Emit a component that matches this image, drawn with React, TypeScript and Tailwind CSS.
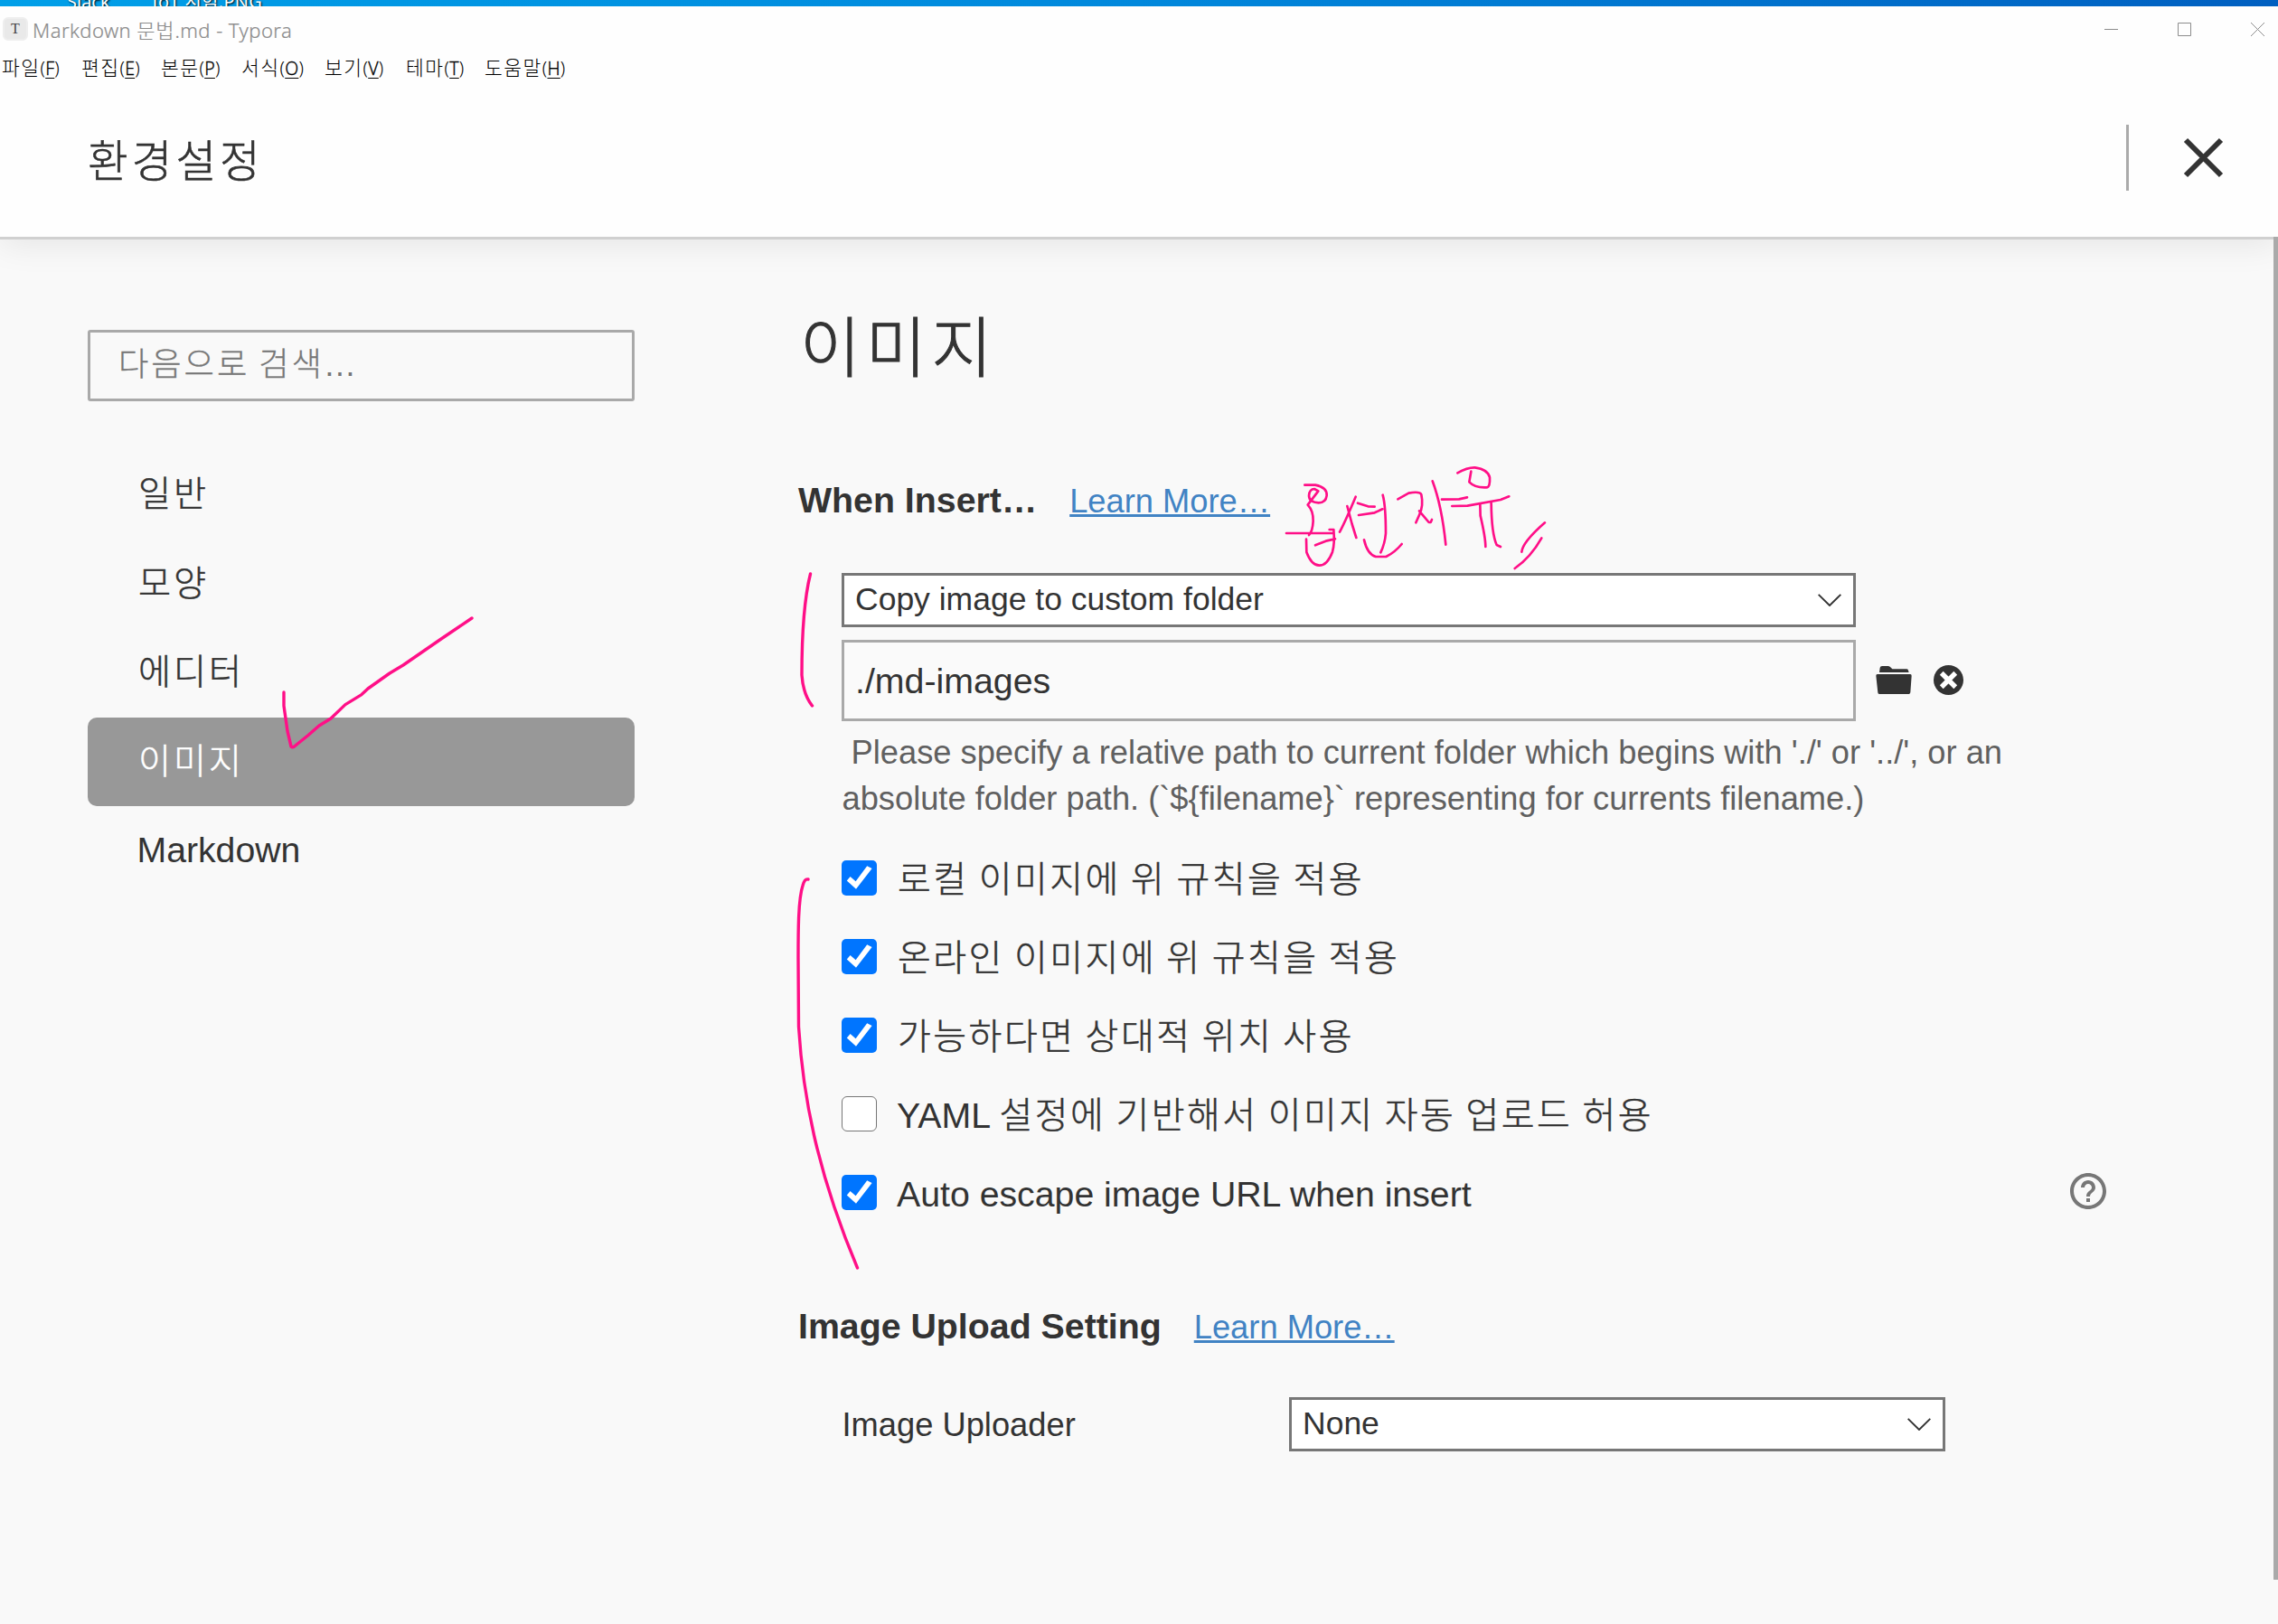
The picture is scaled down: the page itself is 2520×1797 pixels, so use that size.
import React from "react";
import { MdHelpOutline } from "react-icons/md";

const menus = [
  { label: "파일", key: "F", width: "w-[88px]" },
  { label: "편집", key: "E", width: "w-[88px]" },
  { label: "본문", key: "P", width: "w-[89px]" },
  { label: "서식", key: "O", width: "w-[92px]" },
  { label: "보기", key: "V", width: "w-[90px]" },
  { label: "테마", key: "T", width: "w-[87px]" },
  { label: "도움말", key: "H", width: "w-[100px]" },
];

const navItems = ["일반", "모양", "에디터", "이미지", "Markdown"];

const options = [
  { latin: "", text: "로컬 이미지에 위 규칙을 적용", checked: true },
  { latin: "", text: "온라인 이미지에 위 규칙을 적용", checked: true },
  { latin: "", text: "가능하다면 상대적 위치 사용", checked: true },
  { latin: "YAML ", text: "설정에 기반해서 이미지 자동 업로드 허용", checked: false },
  { latin: "Auto escape image URL when insert", text: "", checked: true, help: true },
];

function Chevron() {
  return (
    <svg className="mt-px h-[14px] w-[26px]" viewBox="0 0 26 14" fill="none" stroke="#333" strokeWidth="1.9">
      <path d="M0.7 0.8 L13 13 L25.3 0.8" />
    </svg>
  );
}

function Select({ value, width }: { value: string; width: string }) {
  return (
    <div className={`flex h-[60px] items-center justify-between border-[3px] border-[#777] bg-white pb-px pl-[12px] pr-[13px] text-[35.5px] ${width}`}>
      <span>{value}</span>
      <Chevron />
    </div>
  );
}

function Checkbox({ checked }: { checked: boolean }) {
  return checked ? (
    <span className="h-[39px] w-[39px] rounded-[5px] bg-[#0075ff]">
      <svg viewBox="0 0 39 39" className="h-full w-full" fill="#fff">
        <path d="M5.8 22.4 L9.6 18 L15.6 23.3 L28.2 6.3 L33.6 9 L16 31.8 Z" />
      </svg>
    </span>
  ) : (
    <span className="h-[39px] w-[39px] rounded-[6px] border border-[#767676] bg-white" />
  );
}

function SectionTitle({ title, className }: { title: string; className: string }) {
  return (
    <div className={`flex h-[50px] items-baseline gap-[36px] pl-px leading-[50px] ${className}`}>
      <h2 className="text-[39.3px] font-bold">{title}</h2>
      <a className="text-[36.3px] text-[#4183c4] underline decoration-[3px] underline-offset-[2px] [text-decoration-skip-ink:none]">
        Learn More…
      </a>
    </div>
  );
}

function Annotations() {
  return (
    <svg
      className="pointer-events-none absolute left-0 top-0 h-[1797px] w-[2520px]"
      viewBox="0 0 2520 1797"
      fill="none"
      stroke="#ff0f87"
      strokeLinecap="round"
      strokeLinejoin="round"
    >
      <g strokeWidth="3.4">
        <path d="M314 766 L314 781 L318 809 L322 826 Q324 828 328 824 L341 813.5 L353 803 L366 795 L382 779.6 L400 768.6 L407 762 L431 745 L446 736 L488 707 L522 684" />
        <path d="M896.5 635 C889 665 887 700 887 747 C888 762 893 774 898.5 781" />
        <path d="M894 973 Q890 972 888 980 C883 995 883 1030 883 1060 L883.5 1136 C888 1210 903 1295 948.5 1403" />
      </g>
      <g transform="translate(1360 480) scale(0.33333)" strokeWidth="8">
        <path d="M250 170 L285 170 Q325 178 323 205 Q320 229 296 229 Q264 228 264 205 Q266 183 282 183 L295 190 L260 236 Q279 256 278 290 Q276 325 264 336" />
        <path d="M189 330 L346 330 M332 318 L346 318 Q350 365 342 392 Q325 437 298 437 Q272 436 256 393 L255 350 M285 370 L320 356 L351 349" />
        <path d="M419 209 Q385 290 366 326 M391 240 L407 300 L421 345 M426 230 L460 241 L482 242 M429 270 L482 262 L508 250 M509 203 Q519 240 519 330 Q516 365 502 394 M447 352 Q458 400 486 408 L520 408 Q550 393 572 366" />
        <path d="M559 217 L595 197 Q632 190 637 202 Q645 240 630 270 L619 295 M630 256 L662 294 L668 294 L672 285 M674 157 Q705 240 718 368 M705 218 L762 217 L789 211" />
        <path d="M757 130 Q790 111 815 112 Q858 118 864 145 Q866 178 853 178 Q815 180 796 160 L802 125 M739 240 L790 239 L900 219 L928 208 M832 235 L833 272 Q850 345 850 375 M869 230 Q870 330 887 369 L900 375" />
        <path d="M1047 295 Q973 360 970 392 M1036 346 Q1000 410 947 447" />
      </g>
    </svg>
  );
}

export default function App() {
  return (
    <div className="relative flex h-[1797px] w-[2520px] flex-col overflow-hidden bg-[#f9f9f9] font-['Liberation_Sans','Noto_Sans_CJK_KR',sans-serif] text-[#333]">
      <div className="flex h-[7px] shrink-0 items-end gap-[47px] overflow-hidden bg-linear-to-r from-[#009fe8] via-[#0088dc] to-[#005fc0] pl-[74px] font-['Noto_Sans','Noto_Sans_CJK_KR',sans-serif] text-[20px] leading-[20px] text-white [text-shadow:1px_1px_2px_#000]">
        <span className="-mb-[5px] w-[47px]">Slack</span>
        <span className="-mb-[5px] whitespace-nowrap tracking-[0.3px]">IoT 시험.PNG</span>
      </div>

      <div className="relative z-10 flex h-[53px] shrink-0 items-start bg-[#fefefe] font-['Noto_Sans','Noto_Sans_CJK_KR',sans-serif] text-[22px] text-[#8c8c8c]">
        <div className="ml-[3px] mt-[12px] flex h-[26px] w-[28px] items-center justify-center rounded-[6px] border-2 border-[#eee] bg-[#e9e9e9] font-['Liberation_Serif',serif] text-[16px] text-[#444]">
          T
        </div>
        <div className="ml-[5px] mt-[11px] flex-1 whitespace-pre font-light leading-[30px] tracking-[0.45px] [-webkit-text-stroke:0.2px]">
          Markdown <span className="tracking-[0.8px]">문법</span>.md - Typora
        </div>
        <svg className="mr-[15px] mt-[18px] h-[15px] w-[177px]" viewBox="0 0 177 15" fill="none" stroke="#8c8c8c">
          <path d="M0 7.5 H15" />
          <path d="M81.5 0.5 h14 v14 h-14 Z" />
          <path d="M162 0 L177 15 M177 0 L162 15" />
        </svg>
      </div>

      <div className="relative z-10 flex h-[32px] shrink-0 bg-[#fefefe] pl-[2px] font-['Noto_Sans','Noto_Sans_CJK_KR',sans-serif] text-[19.5px] leading-[30px] text-black">
        {menus.map((m) => (
          <div key={m.key} className={`whitespace-nowrap ${m.width}`}>
            <span className="text-[21.5px] font-light tracking-[1.5px]">{m.label}</span>
            <span className="font-light tracking-[0.2px]">
              (<span className="underline decoration-1 underline-offset-[3px] [-webkit-text-stroke:0.3px]">{m.key}</span>)
            </span>
          </div>
        ))}
      </div>

      <header className="relative flex h-[173px] shrink-0 items-center border-b-[3px] border-[#d0d0d0] bg-[#fefefe] pl-[97px] shadow-[0_4px_36px_rgba(0,0,0,0.09)]">
        <h1 className="flex-1 pt-[4px] text-[48.6px] font-light leading-[60px] tracking-[4px] [-webkit-text-stroke:0.6px]">환경설정</h1>
        <div className="mr-[60px] mb-[5px] h-[73px] w-[3px] bg-[#aaa]" />
        <svg className="mr-[60px] mb-[5px] h-[45px] w-[45px]" viewBox="0 0 45 45" stroke="#333" strokeWidth="6">
          <path d="M3 3 L42 42 M42 3 L3 42" />
        </svg>
      </header>

      <div className="flex flex-1">
        <aside className="w-[882px] pl-[97px] pt-[100px]">
          <div className="flex h-[79px] w-[605px] items-center rounded-[3px] border-[3px] border-[#a9a9a9] pl-[31px] text-[36.3px] font-light text-[#777]">
            <span className="tracking-[2.9px] [-webkit-text-stroke:0.3px] [word-spacing:-2.9px]">다음으로 검색</span>
            <span className="-ml-px">…</span>
          </div>
          <nav className="mt-[54px] w-[605px] text-[39.2px] leading-[98.5px]">
            {navItems.map((n) => (
              <div
                key={n}
                className={`h-[98.5px] rounded-[10px] ${n === "Markdown" ? "pl-[54.5px]" : "pl-[56px] font-light tracking-[2.9px] [-webkit-text-stroke:0.5px]"} ${n === "이미지" ? "bg-[#989898] text-white" : ""}`}
              >
                {n}
              </div>
            ))}
          </nav>
        </aside>

        <main className="flex-1">
          <h1 className="mt-[71px] pl-[3px] text-[73px] font-light leading-[100px] tracking-[5.6px] [-webkit-text-stroke:1px]">이미지</h1>
          <SectionTitle title="When Insert…" className="mt-[92.4px]" />
          <div className="ml-[49px] mt-[55.6px]">
            <Select value="Copy image to custom folder" width="w-[1122px]" />
            <div className="mt-[14px] flex items-center">
              <div className="flex h-[90px] w-[1122px] items-center border-[3px] border-[#a9a9a9] bg-[#fafafa] pl-[12px] pt-px text-[39.3px]">
                ./md-images
              </div>
              <svg className="ml-[22px] h-[31px] w-[40px]" viewBox="345 414 118 93" fill="#333">
                <path d="M356 435 L358 420 Q359 414 365 414 H384 Q389 414 392 417 L399 424 H447 Q452 424 452 429 L454 435 Z" />
                <path d="M349 441 H459 Q463 441 463 446 L459 502 Q458 507 454 507 H356 Q351 507 351 502 L345 446 Q345 441 349 441 Z" />
              </svg>
              <svg className="ml-[23.5px] h-[33px] w-[33px]" viewBox="0 0 98 98">
                <circle cx="49" cy="49" r="49" fill="#333" />
                <path d="M26 26 L72 72 M72 26 L26 72" stroke="#fff" strokeWidth="16" />
              </svg>
            </div>
            <p className="mt-[9.4px] whitespace-pre pl-[0.5px] text-[36.28px] leading-[51px] text-[#606060]">
              {" Please specify a relative path to current folder which begins with './' or '../', or an\nabsolute folder path. (`${filename}` representing for currents filename.)"}
            </p>
            <div className="mt-[18.6px] w-[1404px]">
              {options.map((o, i) => (
                <div key={i} className="flex h-[87px] items-center">
                  <Checkbox checked={o.checked} />
                  <span className={`flex-1 whitespace-pre text-[39.25px] ${o.latin ? "ml-[22px] pt-[4px]" : "ml-[23px] pt-[3px]"}`}>
                    {o.latin}
                    <span className="text-[40px] font-light tracking-[2.5px] [-webkit-text-stroke:0.5px] [word-spacing:-2.5px]">{o.text}</span>
                  </span>
                  {o.help && <MdHelpOutline className="mr-[1.5px] -mt-[2px] h-[48px] w-[48px] text-[#777]" />}
                </div>
              ))}
            </div>
          </div>
          <SectionTitle title="Image Upload Setting" className="mt-[79.4px]" />
          <div className="ml-[49px] mt-[53.6px] flex items-center text-[36.3px]">
            <span className="w-[495px] pl-[0.5px] pt-[2px]">Image Uploader</span>
            <Select value="None" width="w-[726px]" />
          </div>
        </main>

        <div className="relative -mt-[3px] h-[1486px] w-[5px] bg-[#aaa]" />
      </div>

      <Annotations />
    </div>
  );
}
